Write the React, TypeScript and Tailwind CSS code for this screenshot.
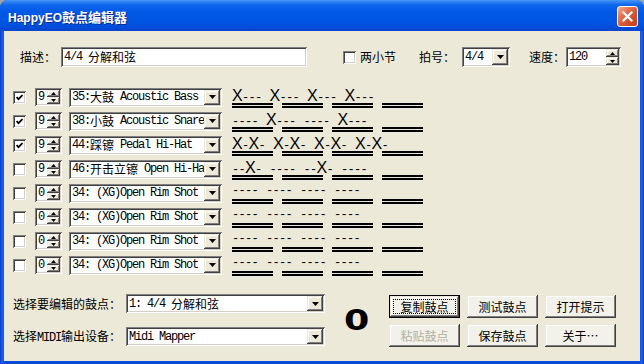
import React from "react";

const SUNKEN =
  "shadow-[inset_1px_1px_0_#808080,inset_-1px_-1px_0_#ffffff,inset_2px_2px_0_#404040,inset_-2px_-2px_0_#d4d0c8]";
const RAISED =
  "shadow-[inset_-1px_-1px_0_#404040,inset_1px_1px_0_#ece9d8,inset_-2px_-2px_0_#808080,inset_2px_2px_0_#ffffff]";

const CJK = /[\u2026\u3000-\u9fff\uff00-\uffef]/;

function Mixed({ text }: { text: string }) {
  const parts = text.split(/([\u2026\u3000-\u9fff\uff00-\uffef]+)/).filter(Boolean);
  return (
    <>
      {parts.map((p, i) =>
        CJK.test(p) ? (
          <span key={i} className="font-['Noto_Sans_CJK_SC',sans-serif] text-[12px] tracking-normal">
            {p}
          </span>
        ) : (
          <span key={i} className="whitespace-pre font-['Liberation_Mono',monospace] text-[12px] tracking-[-1.2px]">
            {p}
          </span>
        )
      )}
    </>
  );
}

function Down() {
  return (
    <svg width="7" height="4" viewBox="0 0 7 4">
      <path d="M0 0H7L3.5 4Z" fill="#000" />
    </svg>
  );
}

function SmallUp() {
  return (
    <svg width="5" height="3" viewBox="0 0 5 3">
      <path d="M0 3H5L2.5 0Z" fill="#000" />
    </svg>
  );
}

function SmallDown() {
  return (
    <svg width="5" height="3" viewBox="0 0 5 3">
      <path d="M0 0H5L2.5 3Z" fill="#000" />
    </svg>
  );
}

function Combo({ text, className }: { text: string; className: string }) {
  return (
    <div className={`flex items-stretch bg-white p-[2px] ${SUNKEN} ${className}`}>
      <div className="flex min-w-0 flex-1 items-center overflow-hidden whitespace-nowrap pl-[1px] leading-none">
        <Mixed text={text} />
      </div>
      <div className={`flex w-[16px] shrink-0 items-center justify-center bg-[#ece9d8] ${RAISED}`}>
        <Down />
      </div>
    </div>
  );
}

function Spin({ text, className }: { text: string; className: string }) {
  return (
    <div className={`flex items-stretch bg-white p-[2px] ${SUNKEN} ${className}`}>
      <div className="flex min-w-0 flex-1 items-center overflow-hidden whitespace-nowrap pl-[1px] leading-none">
        <Mixed text={text} />
      </div>
      <div className="flex w-[13px] shrink-0 flex-col">
        <div className={`flex flex-1 items-center justify-center bg-[#ece9d8] ${RAISED}`}>
          <SmallUp />
        </div>
        <div className={`flex flex-1 items-center justify-center bg-[#ece9d8] ${RAISED}`}>
          <SmallDown />
        </div>
      </div>
    </div>
  );
}

function Check({ checked, className }: { checked?: boolean; className?: string }) {
  return (
    <div className={`flex h-[13px] w-[13px] shrink-0 items-center justify-center bg-white ${SUNKEN} ${className ?? ""}`}>
      {checked && (
        <svg width="7" height="7" viewBox="0 0 7 7">
          <path d="M0.5 3L2.5 5.2L6.5 1" stroke="#000" strokeWidth="1.8" fill="none" />
        </svg>
      )}
    </div>
  );
}

function PatternChar({ c }: { c: string }) {
  if (c === "X")
    return <span className="inline-block w-[10px] text-center font-['Liberation_Sans',sans-serif] text-[16px] leading-[15px]">X</span>;
  if (c === "-")
    return <span className="inline-block w-[6.5px] text-center font-['Liberation_Mono',monospace] text-[12px] leading-[15px]">-</span>;
  return <span className="inline-block w-[8px] font-['Liberation_Mono',monospace] text-[12px] leading-[15px]">{"\u00a0"}</span>;
}

function Pattern({ p }: { p: string }) {
  return (
    <div className="flex flex-col self-start pt-[3px]">
      <div className="flex h-[15px] items-baseline overflow-visible">
        {p.split("").map((c, i) => (
          <PatternChar key={i} c={c} />
        ))}
      </div>
      <div className="flex gap-[9px]">
        {[0, 1, 2, 3].map((i) => (
          <div key={i} className="flex w-[41px] flex-col gap-[1px]">
            <div className="h-[2px] bg-black" />
            <div className="h-[2px] bg-black" />
          </div>
        ))}
      </div>
    </div>
  );
}

const rows = [
  { on: true, n: "9", name: "35:大鼓 Acoustic Bass", p: "X--- X--- X--- X---" },
  { on: true, n: "9", name: "38:小鼓 Acoustic Snare", p: "---- X--- ---- X---" },
  { on: true, n: "9", name: "44:踩镲 Pedal Hi-Hat", p: "X-X- X-X- X-X- X-X-" },
  { on: false, n: "9", name: "46:开击立镲 Open Hi-Hat", p: "--X- ---- --X- ----" },
  { on: false, n: "0", name: "34: (XG)Open Rim Shot", p: "---- ---- ---- ----" },
  { on: false, n: "0", name: "34: (XG)Open Rim Shot", p: "---- ---- ---- ----" },
  { on: false, n: "0", name: "34: (XG)Open Rim Shot", p: "---- ---- ---- ----" },
  { on: false, n: "0", name: "34: (XG)Open Rim Shot", p: "---- ---- ---- ----" },
];

function Btn({ label, focused, disabled }: { label: string; focused?: boolean; disabled?: boolean }) {
  if (focused)
    return (
      <div className="h-[23px] w-[71px] border border-black">
        <div className={`relative flex h-full w-full items-center justify-center bg-[#f2f1ea] ${RAISED}`}>
          <span className="absolute inset-x-[3px] inset-y-[3px] border border-dotted border-black" />
          <span className="text-[12px] leading-none">{label}</span>
        </div>
      </div>
    );
  return (
    <div className={`flex h-[23px] w-[71px] items-center justify-center bg-[#f2f1ea] ${RAISED}`}>
      <span className={`text-[12px] leading-none ${disabled ? "text-[#b3b0a2]" : "text-black"}`}>{label}</span>
    </div>
  );
}

export default function App() {
  return (
    <div className="h-[364px] w-[644px] bg-[#9ea3a8] font-['Noto_Sans_CJK_SC',sans-serif] text-[12px] text-black">
      <div className="flex h-full flex-col overflow-hidden rounded-t-[8px] bg-[linear-gradient(90deg,#0a3fcf_0px,#1f66ee_3px,#0a4ad8_4px,#0a4ad8_640px,#1f66ee_641px,#0a3fcf_644px)]">
        {/* Title bar */}
        <div className="flex h-[31px] shrink-0 items-center bg-[linear-gradient(180deg,#4a98fa_0px,#2f83f5_2px,#0e66ec_5px,#0059e6_12px,#0055e3_22px,#004dda_27px,#0a44cc_31px)] pl-[8px] pr-[6px]">
          <span className="pt-[2px] font-['Liberation_Sans',sans-serif] text-[12px] font-bold text-white [text-shadow:1px_1px_0_#0b2a8a]">
            HappyEO
            <span className="font-['Noto_Sans_CJK_SC',sans-serif] text-[13px] font-bold">鼓点编辑器</span>
          </span>
          <div className="ml-auto mt-[1px] flex h-[21px] w-[21px] items-center justify-center rounded-[3px] border border-white bg-[linear-gradient(135deg,#f4ad94_0%,#e3704e_35%,#d3502c_65%,#c0401c_100%)]">
            <svg width="11" height="11" viewBox="0 0 11 11">
              <path d="M1.5 1.5L9.5 9.5M9.5 1.5L1.5 9.5" stroke="#fff" strokeWidth="2.2" strokeLinecap="square" />
            </svg>
          </div>
        </div>

        {/* Client */}
        <div className="mx-[4px] mb-[3px] flex flex-1 flex-col bg-[#ece9d8] pt-[16px]">
          {/* Top row */}
          <div className="flex h-[20px] items-center">
            <span className="ml-[16px] w-[41px] shrink-0">描述：</span>
            <div className={`flex h-[20px] w-[246px] items-center bg-white pl-[3px] leading-none ${SUNKEN}`}>
              <Mixed text="4/4 分解和弦" />
            </div>
            <Check className="ml-[36px]" />
            <span className="ml-[4px]">两小节</span>
            <span className="ml-[23px]">拍号：</span>
            <Combo text="4/4" className="ml-[7px] h-[20px] w-[48px]" />
            <span className="ml-[19px]">速度：</span>
            <Spin text="120" className="ml-[1px] h-[20px] w-[55px]" />
          </div>

          {/* Drum rows */}
          <div className="mt-[18px] flex flex-col">
            {rows.map((r, i) => (
              <div key={i} className="flex h-[24px] items-center">
                <Check checked={r.on} className="ml-[9px]" />
                <Spin text={r.n} className="ml-[9px] h-[18px] w-[27px]" />
                <Combo text={r.name} className="ml-[7px] h-[19px] w-[153px]" />
                <div className="ml-[10px] flex h-full">
                  <Pattern p={r.p} />
                </div>
              </div>
            ))}
          </div>

          {/* Bottom */}
          <div className="mt-[17px] flex items-start">
            <div className="ml-[9px] flex flex-col gap-[14px]">
              <div className="flex h-[19px] items-center">
                <span className="w-[113px] shrink-0">选择要编辑的鼓点：</span>
                <Combo text="1: 4/4 分解和弦" className="h-[19px] w-[199px]" />
              </div>
              <div className="flex h-[19px] items-center">
                <span className="w-[113px] shrink-0 leading-none">
                  <Mixed text="选择MIDI输出设备：" />
                </span>
                <Combo text="Midi Mapper" className="h-[19px] w-[199px]" />
              </div>
            </div>
            <div className="flex h-[53px] w-[64px] items-center justify-center">
              <span className="inline-block scale-x-[1.3] font-['DejaVu_Sans',sans-serif] text-[28px] font-bold leading-none">0</span>
            </div>
            <div className="mt-[1px] grid grid-cols-[71px_71px_71px] gap-x-[7px] gap-y-[6px]">
              <Btn label="复制鼓点" focused />
              <Btn label="测试鼓点" />
              <Btn label="打开提示" />
              <Btn label="粘贴鼓点" disabled />
              <Btn label="保存鼓点" />
              <Btn label="关于…" />
            </div>
          </div>
        </div>
      </div>
    </div>
  );
}
